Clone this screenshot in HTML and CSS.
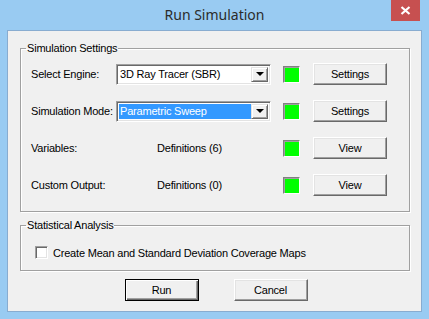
FILE: index.html
```html
<!DOCTYPE html>
<html>
<head>
  <title>Run Simulation</title>
  <link rel="stylesheet" href="styles.css">
</head>
<body>
  <div class="window">
    <!-- Title bar -->
    <div class="titlebar">
      <div class="title">Run Simulation</div>
      <div class="close">
        <svg width="11" height="9" viewBox="0 0 11 9"><path d="M1.5 1 L9.5 8 M9.5 1 L1.5 8" stroke="#fff" stroke-width="2.2"/></svg>
      </div>
    </div>

    <div class="client">
      <!-- Simulation settings -->
      <fieldset class="group settings">
        <legend>Simulation Settings</legend>
        <div class="rows">
          <label>Select Engine:</label>
          <div class="combo">
            <span class="combo-text">3D Ray Tracer (SBR)</span>
            <span class="drop"><span class="arrow"></span></span>
          </div>
          <span class="status"></span>
          <button class="btn">Settings</button>

          <label>Simulation Mode:</label>
          <div class="combo">
            <span class="combo-text selected">Parametric Sweep</span>
            <span class="drop"><span class="arrow"></span></span>
          </div>
          <span class="status"></span>
          <button class="btn">Settings</button>

          <label>Variables:</label>
          <span class="defs">Definitions (6)</span>
          <span class="status"></span>
          <button class="btn">View</button>

          <label>Custom Output:</label>
          <span class="defs">Definitions (0)</span>
          <span class="status"></span>
          <button class="btn">View</button>
        </div>
      </fieldset>

      <!-- Statistical analysis -->
      <fieldset class="group stats">
        <legend>Statistical Analysis</legend>
        <div class="check-row">
          <span class="checkbox"></span>
          <span>Create Mean and Standard Deviation Coverage Maps</span>
        </div>
      </fieldset>

      <div class="actions">
        <button class="btn default">Run</button>
        <button class="btn">Cancel</button>
      </div>
    </div>
  </div>
</body>
</html>
```

FILE: styles.css
```css
/* Dialog window */
body {
  margin: 0;
  font-family: "Liberation Sans", Arial, sans-serif;
  font-size: 11px;
  letter-spacing: -0.2px;
  color: #000;
}
.window {
  width: 429px;
  height: 319px;
  background: #99cbf2;
  display: flex;
  flex-direction: column;
}
.titlebar {
  height: 30px;
  display: grid;
  grid-template-columns: 1fr auto 1fr;
  align-items: start;
}
.title {
  grid-column: 2;
  font-family: "Noto Sans", sans-serif;
  font-size: 14px;
  letter-spacing: 0;
  line-height: 30px;
  color: #2b2b2b;
}
.close {
  grid-column: 3;
  justify-self: end;
  margin-right: 9px;
  width: 29px;
  height: 21px;
  background: #c75050;
  display: flex;
  align-items: center;
  justify-content: center;
}
.client {
  flex: 1;
  margin: 0 7px 7px 7px;
  border: 1px solid #88acd0;
  background: #f0f0f0;
  padding-top: 11px;
}

/* Group boxes */
.group {
  margin: 0 11px 0 12px;
  padding: 0;
  border: 1px solid #a0a0a0;
  box-shadow: inset 1px 1px 0 #fff, 1px 1px 0 #fff;
}
.group legend {
  margin-left: 5px;
  padding: 0 1px;
  line-height: 13px;
}
.rows {
  display: grid;
  grid-template-columns: 85px 167px 30px 74px;
  grid-auto-rows: 22px;
  row-gap: 15px;
  align-items: center;
  padding: 8px 0 15px 10px;
}
.defs {
  margin-left: 41px;
}
.stats {
  margin-top: 7px;
}
.check-row {
  display: flex;
  align-items: center;
  gap: 5px;
  padding: 14px 0 11px 14px;
}
.checkbox {
  width: 13px;
  height: 13px;
  box-sizing: border-box;
  background: #fff;
  border: 1px solid;
  border-color: #a0a0a0 #fff #fff #a0a0a0;
  box-shadow: inset 1px 1px 0 #696969, inset -1px -1px 0 #e3e3e3;
}

/* Combo boxes */
.combo {
  width: 155px;
  height: 21px;
  box-sizing: border-box;
  background: #fff;
  border: 1px solid;
  border-color: #a0a0a0 #fff #fff #a0a0a0;
  box-shadow: inset 1px 1px 0 #696969, inset -1px -1px 0 #e3e3e3;
  display: flex;
  align-items: stretch;
  padding: 2px;
}
.combo-text {
  flex: 1;
  padding-left: 1px;
  line-height: 15px;
}
.combo-text.selected {
  background: #3399ff;
  color: #fff;
}
.drop {
  width: 17px;
  box-sizing: border-box;
  background: #f0f0f0;
  border: 1px solid;
  border-color: #e3e3e3 #696969 #696969 #e3e3e3;
  box-shadow: inset 1px 1px 0 #fff, inset -1px -1px 0 #a0a0a0;
  display: flex;
  align-items: center;
  justify-content: center;
}
.arrow {
  width: 0;
  height: 0;
  border-left: 4px solid transparent;
  border-right: 4px solid transparent;
  border-top: 4px solid #000;
}

/* Status lamps */
.status {
  width: 17px;
  height: 17px;
  box-sizing: border-box;
  background: #00ff00;
  border: 1px solid;
  border-color: #808080 #fff #fff #808080;
  box-shadow: inset 1px 1px 0 #a0a0a0;
}

/* Buttons */
.btn {
  width: 74px;
  height: 22px;
  box-sizing: border-box;
  font-family: inherit;
  font-size: 11px;
  letter-spacing: -0.2px;
  color: #000;
  background: #f0f0f0;
  border: 1px solid;
  border-color: #fff #696969 #696969 #fff;
  box-shadow: inset -1px -1px 0 #a0a0a0, inset 1px 1px 0 #e3e3e3;
  padding: 0;
}
.btn.default {
  border: 1px solid #000;
  box-shadow: inset 1px 1px 0 #fff, inset -1px -1px 0 #696969, inset -2px -2px 0 #a0a0a0;
}
.actions {
  display: flex;
  justify-content: center;
  gap: 35px;
  padding-left: 3px;
  margin-top: 8px;
}
```
